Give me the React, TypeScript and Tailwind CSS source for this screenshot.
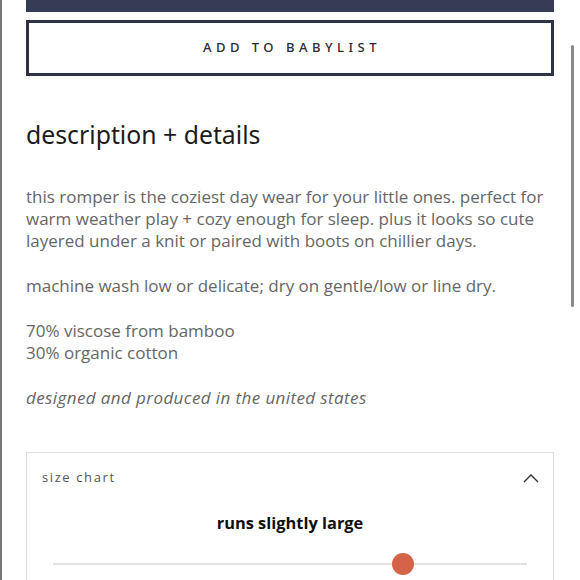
import React from "react";

export default function App() {
  const body = { fontFamily: "'Open Sans', 'Liberation Sans', sans-serif" };
  return (
    <div className="relative w-[580px] h-[580px] overflow-hidden bg-white border-l-2 border-[#777]">
      <div className="pl-[24px] pr-[26px]">
        <div className="h-[12px] bg-[#363c55]" />
        <button
          className="mt-[8px] w-full h-[56px] border-[3px] border-[#2d3247] bg-white flex items-center justify-center pl-[4px] text-[13px] tracking-[4.5px] text-[#2a2a33]"
          style={{ fontFamily: "'Noto Sans', 'Liberation Sans', sans-serif", fontWeight: 500 }}
        >
          ADD TO BABYLIST
        </button>
        <h2
          className="mt-[42px] text-[24.8px] leading-[32px] text-[#1c1c1c]"
          style={{ fontFamily: "'Noto Sans', 'Liberation Sans', sans-serif" }}
        >
          description + details
        </h2>
        <div className="mt-[36px] text-[17px] leading-[22px] text-[#666]" style={body}>
          <p className="mb-[23px]">
            this romper is the coziest day wear for your little ones. perfect for warm weather play + cozy enough for sleep. plus it looks so cute layered under a knit or paired with boots on chillier days.
          </p>
          <p className="mb-[23px]">machine wash low or delicate; dry on gentle/low or line dry.</p>
          <p className="mb-[23px]">
            70% viscose from bamboo
            <br />
            30% organic cotton
          </p>
          <p className="italic tracking-[0.4px]">designed and produced in the united states</p>
        </div>
        <div className="mt-[43px] border border-[#ddd] h-[200px]">
          <div className="flex items-start justify-between pl-[15px] pr-[14px] pt-[16px] h-[36px]">
            <span className="text-[13px] leading-[16px] tracking-[1.6px] text-[#555]" style={body}>
              size chart
            </span>
            <svg width="16" height="10" viewBox="0 0 16 10" fill="none" className="mt-[4px]">
              <path d="M1 9 L8 2 L15 9" stroke="#333" strokeWidth="1.4" />
            </svg>
          </div>
          <div className="mt-[23px] text-center text-[16.4px] leading-[22px] font-bold text-[#111]" style={body}>
            runs slightly large
          </div>
          <div className="relative mx-[26px] mt-[29px] h-[2px] bg-[#e2e2e2]">
            <div className="absolute left-[339px] top-[-10px] w-[22px] h-[22px] rounded-full bg-[#d4634a]" />
          </div>
        </div>
      </div>
      <div className="absolute right-[6px] top-[45px] w-[3px] h-[262px] rounded-full bg-[#8a8a8a]" />
    </div>
  );
}
